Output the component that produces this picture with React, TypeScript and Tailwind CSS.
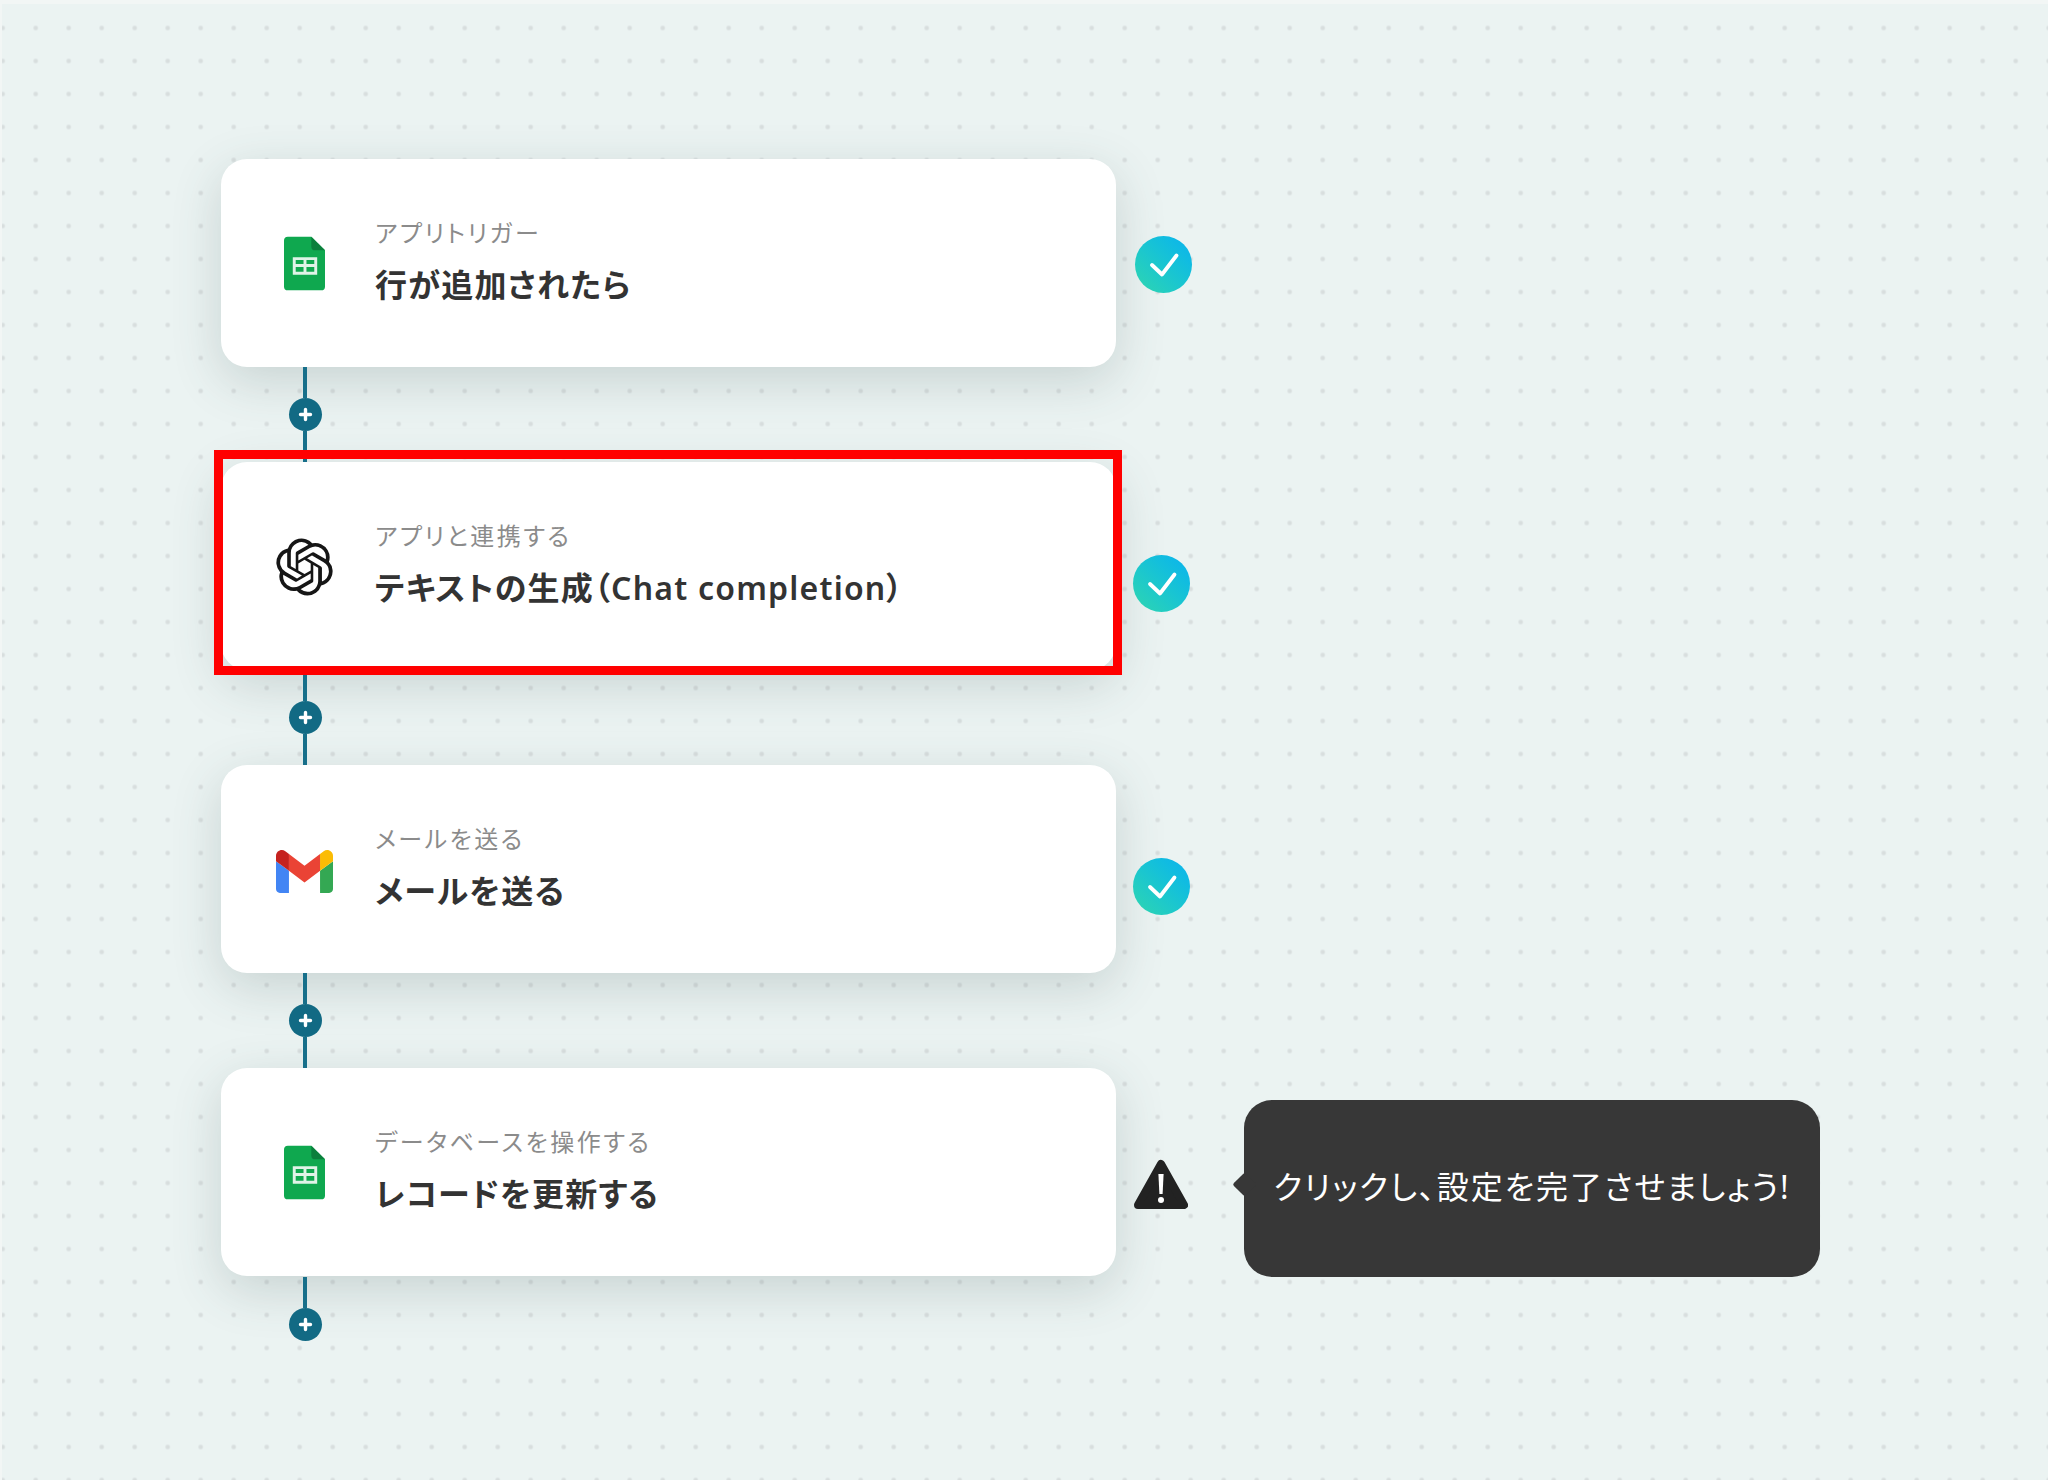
import { SiOpenai } from "react-icons/si";

function SheetIcon() {
  return (
    <svg className="-mt-[1px]" width="41" height="55" viewBox="0 0 42 55">
      <path d="M4 0h24l14 14v37a4 4 0 0 1-4 4H4a4 4 0 0 1-4-4V4a4 4 0 0 1 4-4z" fill="#0fa84f" />
      <path d="M28 0l14 14H32a4 4 0 0 1-4-4z" fill="#0b7f3c" />
      <path
        d="M9 21h25v18H9z M12 24v4h8v-4z M23 24v4h8v-4z M12 31v5h8v-5z M23 31v5h8v-5z"
        fill="#dff3e7"
        fillRule="evenodd"
      />
    </svg>
  );
}

function GmailIcon() {
  return (
    <svg className="mt-[2px]" width="57" height="43" viewBox="52 42 88 66">
      <path fill="#4285f4" d="M58 108h14V74L52 59v43c0 3.32 2.69 6 6 6" />
      <path fill="#34a853" d="M120 108h14c3.32 0 6-2.69 6-6V59l-20 15" />
      <path fill="#fbbc04" d="M120 48v26l20-15v-8c0-7.42-8.47-11.65-14.4-7.2" />
      <path fill="#ea4335" d="M72 74V48l24 18 24-18v26L96 92" />
      <path fill="#c5221f" d="M52 51v8l20 15V48l-5.6-4.2c-5.94-4.45-14.4-.22-14.4 7.2" />
    </svg>
  );
}

function CheckBadge({ className }: { className: string }) {
  return (
    <div className={`flex h-[57px] w-[57px] shrink-0 rounded-full bg-linear-to-tr from-[#2fd6ae] to-[#0cb2f0] ${className}`}>
      <svg width="57" height="57" viewBox="0 0 57 57">
        <path d="M17 29l10 9.5L41.5 19.5" fill="none" stroke="#fff" strokeWidth="3.8" strokeLinecap="round" strokeLinejoin="round" />
      </svg>
    </div>
  );
}

function WarningIcon() {
  return (
    <svg className="mt-[91px] ml-[18px] shrink-0" width="54" height="51" viewBox="0 0 54 51">
      <path d="M27 5L50 46H4z" fill="#222222" stroke="#222222" strokeWidth="8" strokeLinejoin="round" />
      <path d="M24.4 15h5.2l-1 20h-3.2z" fill="#fff" />
      <circle cx="27" cy="41" r="3" fill="#fff" />
    </svg>
  );
}

function Connector({ last }: { last?: boolean }) {
  return (
    <div className="relative z-[1] ml-[67.5px] flex h-[95px] w-[33px] flex-col items-center">
      <div className="h-[31px] w-[4px] bg-[#176f8a]" />
      <div className="flex h-[33px] w-[33px] shrink-0 items-center justify-center rounded-full bg-[#126a84]">
        <svg width="15" height="15" viewBox="0 0 15 15">
          <path d="M7.5 2.5v10M2.5 7.5h10" stroke="#fff" strokeWidth="3.4" strokeLinecap="round" />
        </svg>
      </div>
      {!last && <div className="h-[31px] w-[4px] bg-[#176f8a]" />}
    </div>
  );
}

function Card({ icon, label, title }: { icon: React.ReactNode; label: string; title: React.ReactNode }) {
  return (
    <div className="flex h-[208px] w-[895px] shrink-0 items-center rounded-[26px] bg-white shadow-[0_14px_50px_rgba(60,85,85,0.2)]">
      <div className="ml-[55px] mt-[2px] flex w-[57px] justify-center">{icon}</div>
      <div className="ml-[42px] -mt-[3px] flex flex-col gap-[17px] [font-feature-settings:'palt']">
        <div className="text-[24px] leading-[30px] tracking-[2.5px] text-[#8b8b8b]">{label}</div>
        <div className="text-[32px] leading-[40px] font-semibold tracking-[1.2px] whitespace-nowrap text-[#333333]">{title}</div>
      </div>
    </div>
  );
}

export default function App() {
  return (
    <div className="h-[1480px] w-[2048px] overflow-hidden border-t-[4px] border-l-[2px] border-t-[#f2f6f5] border-l-[#f2f6f5] bg-[#ebf3f2] bg-[radial-gradient(circle,#d8dede_1.5px,transparent_3px)] bg-[length:33px_33px] bg-[position:-15.8px_7.5px] pt-[155px] pl-[219px] font-['Noto_Sans','Noto_Sans_CJK_JP',sans-serif]">
      <div className="flex items-start">
        <Card icon={<SheetIcon />} label="アプリトリガー" title="行が追加されたら" />
        <CheckBadge className="mt-[77px] ml-[19px]" />
      </div>
      <Connector />
      <div className="relative flex items-start">
        <Card
          icon={<SiOpenai className="text-[58px] text-[#161616]" />}
          label="アプリと連携する"
          title="テキストの生成（Chat completion）"
        />
        <CheckBadge className="mt-[93px] ml-[17px]" />
        <div className="absolute -top-[12px] -left-[7px] z-10 h-[225px] w-[908px] border-[9px] border-[#ff0000]" />
      </div>
      <Connector />
      <div className="flex items-start">
        <Card icon={<GmailIcon />} label="メールを送る" title="メールを送る" />
        <CheckBadge className="mt-[93px] ml-[17px]" />
      </div>
      <Connector />
      <div className="flex items-start">
        <Card icon={<SheetIcon />} label="データベースを操作する" title="レコードを更新する" />
        <WarningIcon />
        <div className="relative mt-[32px] ml-[56px] flex h-[177px] w-[576px] items-center justify-center rounded-[28px] bg-[#373737]">
          <div className="absolute top-[76px] -left-[8px] h-[17px] w-[17px] rotate-45 rounded-[2px] bg-[#373737]" />
          <span className="-mt-[3px] text-[32px] tracking-[1.9px] whitespace-nowrap text-white [font-feature-settings:'palt']">クリックし、設定を完了させましょう!</span>
        </div>
      </div>
      <Connector last />
    </div>
  );
}
